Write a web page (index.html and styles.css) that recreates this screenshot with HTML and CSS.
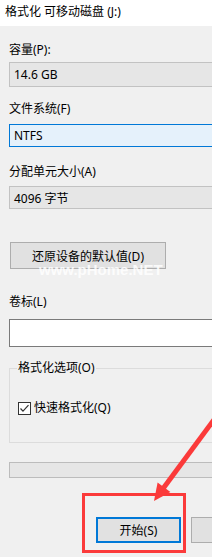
FILE: index.html
```html
<!DOCTYPE html>
<html lang="zh-CN">
<head>
<meta charset="utf-8">
<title>格式化 可移动磁盘 (J:)</title>
<link rel="stylesheet" href="styles.css">
</head>
<body>
<div class="window">
  <div class="title">格式化 可移动磁盘 (J:)</div>
  <div class="content">
    <div class="label l1">容量(P):</div>
    <div class="field disabled f1">14.6 GB</div>
    <div class="label l2">文件系统(F)</div>
    <div class="field focus f2">NTFS</div>
    <div class="label l3">分配单元大小(A)</div>
    <div class="field disabled f3">4096 字节</div>
    <div class="btn restore">还原设备的默认值(D)</div>
    <div class="label l4">卷标(L)</div>
    <div class="input"></div>
    <div class="group">
      <div class="group-title">格式化选项(O)</div>
      <div class="check-row">
        <svg class="checkbox" width="13" height="13" viewBox="0 0 13 13">
          <rect x="0.5" y="0.5" width="12" height="12" fill="#ffffff" stroke="#333333"/>
          <polyline points="2.5,6.5 5,9.2 10.5,3.2" fill="none" stroke="#333333" stroke-width="1.2"/>
        </svg>
        <span>快速格式化(Q)</span>
      </div>
    </div>
    <div class="progress"></div>
    <div class="buttons">
      <div class="btn start">开始(S)</div>
      <div class="btn close" aria-label="关闭"></div>
    </div>
  </div>
  <div class="watermark">www.pHome.NET</div>
  <div class="highlight"></div>
  <svg class="arrow" width="212" height="557" viewBox="0 0 212 557">
    <line x1="216" y1="417" x2="162" y2="490" stroke="#fb3a3a" stroke-width="5"/>
    <polygon points="154,501 157.6,482.6 170.4,492" fill="#fb3a3a"/>
  </svg>
</div>
</body>
</html>
```
FILE: styles.css
```css
html, body {
  margin: 0;
  padding: 0;
}
body {
  background: #f0f0f0;
  font-family: "Noto Sans", "Noto Sans CJK SC", sans-serif;
  font-size: 12px;
  color: #000;
  overflow: hidden;
}
.window {
  position: relative;
  width: 212px;
  height: 557px;
  overflow: hidden;
}
.title {
  height: 26px;
  line-height: 24px;
  padding-left: 5px;
  background: #ffffff;
  white-space: nowrap;
}
.content {
  padding: 16px 0 0 9px;
  display: flex;
  flex-direction: column;
  align-items: flex-start;
}
.label {
  line-height: 16px;
  height: 16px;
  white-space: nowrap;
}
.l1 { margin-bottom: 4px; }
.l2 { margin-top: 14px; margin-bottom: 7px; }
.l3 { margin-top: 17px; margin-bottom: 6px; }
.l4 { margin-top: 25px; margin-bottom: 9px; }
.field {
  box-sizing: border-box;
  width: 240px;
  padding-left: 4px;
  display: flex;
  align-items: center;
  white-space: nowrap;
}
.disabled {
  background: #e6e6e6;
  border: 1px solid #c2c2c2;
}
.focus {
  background: #e5f1fb;
  border: 1px solid #0078d7;
}
.f1 { height: 25px; }
.f2 { height: 23px; }
.f3 { height: 23px; }
.btn {
  box-sizing: border-box;
  background: #e1e1e1;
  border: 1px solid #adadad;
  display: flex;
  align-items: center;
  justify-content: center;
  white-space: nowrap;
}
.restore {
  margin-top: 33px;
  margin-left: 1px;
  width: 156px;
  height: 27px;
}
.input {
  box-sizing: border-box;
  width: 240px;
  height: 28px;
  background: #ffffff;
  border: 1px solid #7a7a7a;
}
.group {
  box-sizing: border-box;
  margin-top: 21px;
  width: 240px;
  height: 75px;
  border: 1px solid #dcdcdc;
}
.group-title {
  display: inline-block;
  margin-top: -9px;
  margin-left: 7px;
  padding: 0 1px;
  line-height: 16px;
  background: #f0f0f0;
  vertical-align: top;
}
.check-row {
  margin-top: 14px;
  margin-left: 8px;
  display: flex;
  align-items: center;
  gap: 3px;
  line-height: 16px;
}
.checkbox {
  display: block;
}
.progress {
  box-sizing: border-box;
  margin-top: 19px;
  width: 240px;
  height: 16px;
  background: #e6e6e6;
  border: 1px solid #bcbcbc;
}
.buttons {
  margin-top: 39px;
  display: flex;
  gap: 10px;
  padding-left: 87px;
}
.start {
  width: 85px;
  height: 26px;
  border: 2px solid #0078d7;
}
.close {
  width: 75px;
  height: 26px;
}
.watermark {
  position: absolute;
  left: 39px;
  top: 261px;
  font-family: "Liberation Sans", sans-serif;
  font-weight: bold;
  font-size: 15px;
  line-height: 18px;
  color: rgba(255, 255, 255, 0.85);
  white-space: nowrap;
}
.highlight {
  position: absolute;
  left: 82px;
  top: 493px;
  width: 104px;
  height: 60px;
  box-sizing: border-box;
  border: 3px solid #fb3a3a;
}
.arrow {
  position: absolute;
  left: 0;
  top: 0;
}
```
